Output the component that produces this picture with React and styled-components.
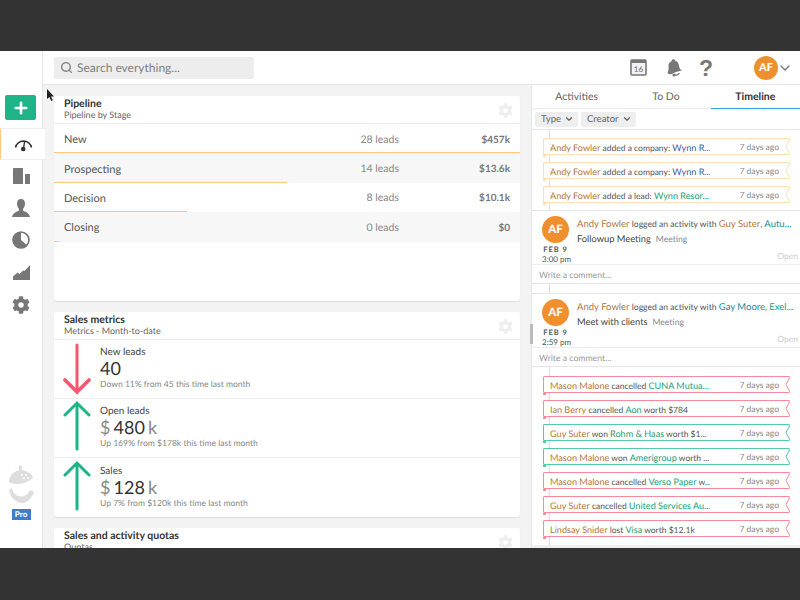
import React from "react"
import styled, { createGlobalStyle } from "styled-components"
import { Search, ChevronDown, Plus } from "lucide-react"
import { FaCog } from "react-icons/fa"

const GlobalStyle = createGlobalStyle`
  html, body { margin: 0; padding: 0; background: #333; }
  * { box-sizing: border-box; }
  body {
    font-family: "Lato", "Open Sans", sans-serif;
    color: #444;
    text-rendering: geometricPrecision;
  }
`

const Page = styled.div`
  width: 800px;
  height: 600px;
  display: flex;
  flex-direction: column;
  overflow: hidden;
`
const Band = styled.div`
  height: ${props => props.$h}px;
  flex: none;
  background: #333;
`
const Screen = styled.div`
  position: relative;
  height: 497px;
  flex: none;
  display: flex;
  background: #fff;
  overflow: hidden;
`

/* left rail */
const Rail = styled.nav`
  width: 43px;
  flex: none;
  display: flex;
  flex-direction: column;
  align-items: center;
  padding-top: 44px;
  border-right: 1px solid #e6e6e6;
  background: #fff;
`
const AddButton = styled.div`
  width: 31px;
  height: 25px;
  margin-left: -1px;
  border-radius: 2px;
  background: #1fb487;
  color: #fff;
  display: flex;
  align-items: center;
  justify-content: center;
`
const RailItem = styled.div`
  position: relative;
  width: ${props => (props.$active ? "45px" : "42px")};
  align-self: flex-start;
  height: ${props => props.$h || 32}px;
  display: flex;
  align-items: center;
  justify-content: center;
  color: ${props => (props.$active ? "#333" : "#777")};
  background: #fff;
  z-index: 1;
  ${props =>
    props.$active &&
    `border-left: 1px solid #fdc77e;
     border-top: 1px solid #eee;
     border-bottom: 1px solid #eee;
     margin-top: 8px;`}
`
const RailSpacer = styled.div`
  flex: 1;
`
const Logo = styled.div`
  display: flex;
  flex-direction: column;
  align-items: center;
  gap: 6px;
  margin-bottom: 28px;
`
const ProBadge = styled.span`
  width: 19px;
  height: 11px;
  background: #3f7cc9;
  color: #fff;
  font-size: 8px;
  font-weight: 900;
  line-height: 11px;
  text-align: center;
`

/* top bar */
const Workspace = styled.div`
  flex: 1;
  min-width: 0;
  display: flex;
  flex-direction: column;
`
const TopBar = styled.header`
  height: 34px;
  flex: none;
  display: flex;
  align-items: center;
  padding: 0 7px 0 11px;
  border-bottom: 1px solid #e6e6e6;
`
const SearchBox = styled.div`
  width: 200px;
  height: 22px;
  display: flex;
  align-items: center;
  gap: 4px;
  padding-left: 6px;
  background: #ededed;
  border-radius: 2px;
  color: #808080;
  font-size: 12px;
`
const TopIcons = styled.div`
  margin-left: auto;
  display: flex;
  align-items: center;
  color: #777;
`
const BellSlot = styled.span`
  margin-left: 20px;
  line-height: 0;
`
const HelpMark = styled.span`
  width: 12px;
  margin-left: 16px;
  font-family: "Liberation Sans", sans-serif;
  font-size: 23px;
  line-height: 24px;
  font-weight: 700;
  text-align: center;
  color: #777;
`
const TopAvatar = styled.div`
  width: 24px;
  height: 24px;
  margin-left: 43px;
  border-radius: 50%;
  background: #f08f2d;
  color: #fff;
  font-size: 11px;
  font-weight: 900;
  display: flex;
  align-items: center;
  justify-content: center;
`
const Caret = styled(ChevronDown)`
  margin-left: -1px;
`
const Below = styled.div`
  flex: 1;
  min-height: 0;
  display: flex;
`

/* dashboard column */
const Dashboard = styled.main`
  width: 488px;
  flex: none;
  padding: 11px 11px 0;
  display: flex;
  flex-direction: column;
  gap: 11px;
  background: #f3f3f3;
  overflow: hidden;
`
const Card = styled.section`
  flex: none;
  height: ${props => props.$h}px;
  background: #fff;
  border-radius: 3px;
  box-shadow: 0 1px 1px #ddd;
  display: flex;
  flex-direction: column;
`
const CardHead = styled.div`
  height: 28px;
  flex: none;
  padding: 2px 7px 0 10px;
  display: flex;
  justify-content: space-between;
  border-bottom: 1px solid #eee;
`
const CardTitle = styled.div`
  font-size: 10.5px;
  line-height: 12px;
  font-weight: 700;
  color: #333;
`
const CardSub = styled.div`
  font-size: 9px;
  line-height: 10px;
  color: #666;
`
const Cog = styled.span`
  color: #eee;
  margin-top: 5px;
  line-height: 0;
`
const StageRow = styled.div`
  position: relative;
  height: 29.4px;
  flex: none;
  display: flex;
  align-items: center;
  padding: 2px 10px 0;
  font-size: 11px;
  color: #555;
  background: ${props => (props.$shade ? "#f7f7f7" : "#fff")};
`
const StageName = styled.span`
  flex: 1;
`
const StageLeads = styled.span`
  width: 60px;
  text-align: right;
  color: #888;
  font-size: 10.5px;
`
const StageValue = styled.span`
  width: 111px;
  text-align: right;
  color: #777;
  font-size: 10px;
  font-weight: 700;
`
const Progress = styled.i`
  position: absolute;
  left: 0;
  bottom: 0;
  height: 1px;
  background: #fdc77e;
`
const MetricRow = styled.div`
  height: 59px;
  flex: none;
  display: flex;
  align-items: center;
  padding-left: 9px;
  border-bottom: ${props => (props.$last ? "none" : "1px solid #eee")};
`
const Arrow = styled.svg`
  width: 28px;
  height: 56px;
  flex: none;
  margin-right: 9px;
`
const MetricBody = styled.div`
  display: flex;
  flex-direction: column;
  padding-bottom: 3px;
`
const MetricLabel = styled.div`
  font-size: 10px;
  line-height: 12px;
  color: #444;
`
const MetricValue = styled.div`
  font-size: 18px;
  line-height: 21px;
  color: #333;
  word-spacing: -1.5px;
`
const Unit = styled.span`
  color: #888;
`
const MetricNote = styled.div`
  font-size: 8.55px;
  line-height: 10px;
  color: #888;
`

/* timeline panel */
const Panel = styled.aside`
  flex: 1;
  min-width: 0;
  position: relative;
  display: flex;
  flex-direction: column;
  border-left: 1px solid #e6e6e6;
  background: #fff;
`
const Grip = styled.i`
  position: absolute;
  left: -2px;
  top: 239px;
  width: 3px;
  height: 20px;
  background: #bbb;
`
const Tabs = styled.div`
  height: 24px;
  flex: none;
  display: flex;
  border-bottom: 1px solid #eee;
`
const Tab = styled.div`
  flex: 1;
  text-align: center;
  font-size: 10.5px;
  line-height: 24px;
  font-weight: ${props => (props.$active ? 700 : 400)};
  color: ${props => (props.$active ? "#333" : "#666")};
  border-bottom: ${props => (props.$active ? "1.5px solid #35a9dd" : "none")};
  height: ${props => (props.$active ? "24px" : "23px")};
`
const Filters = styled.div`
  height: 21px;
  flex: none;
  display: flex;
  align-items: center;
  gap: 3px;
  padding-left: 3px;
  border-bottom: 1px solid #e6e6e6;
`
const Filter = styled.div`
  height: 15px;
  padding: 0 4px 0 6px;
  display: flex;
  align-items: center;
  gap: 3px;
  background: #eee;
  border-radius: 2px;
  font-size: 9.5px;
  color: #666;
`
const Feed = styled.div`
  flex: 1;
  min-height: 0;
  display: flex;
  flex-direction: column;
  padding-top: 8px;
  background: linear-gradient(#ddd, #ddd) 17px 0 / 1px 100% no-repeat;
  border-bottom: 3px solid #eee;
`
const Ribbon = styled.div`
  position: relative;
  flex: none;
  width: 247px;
  height: 17px;
  margin: 0 0 7px 11px;
  padding: 1px 10px 0 6px;
  display: flex;
  justify-content: space-between;
  align-items: center;
  background: #fff;
  border: 1px solid ${props => props.$tone};
  border-left-width: 1.5px;
  border-radius: 1px;
  font-size: 8.5px;
  color: #555;
  white-space: nowrap;
`
const Notch = styled.svg`
  position: absolute;
  right: -1px;
  top: -1px;
  width: 5px;
  height: 17px;
`
const Fold = styled.i`
  position: absolute;
  left: -1.5px;
  bottom: -3px;
  width: 3px;
  height: 2px;
  background: ${props => props.$tone};
`
const RibbonText = styled.span`
  width: 160px;
  overflow: hidden;
`
const Ago = styled.span`
  color: #888;
`
const Person = styled.span`
  color: ${props => props.$c || "#b5763a"};
  font-size: ${props => props.$size || 9.1}px;
`
const ActivityCard = styled.div`
  flex: none;
  margin-bottom: ${props => props.$gap}px;
  background: #fff;
  border-top: 1px solid #e6e6e6;
  border-bottom: 1px solid #e6e6e6;
`
const ActivityMain = styled.div`
  position: relative;
  height: 54px;
  display: flex;
  padding: 5px 0 0 10px;
  border-bottom: 1px solid #eee;
`
const Who = styled.div`
  width: 35px;
  flex: none;
  display: flex;
  flex-direction: column;
  align-items: center;
`
const Avatar = styled.div`
  width: 27px;
  height: 27px;
  border-radius: 50%;
  background: #f08f2d;
  color: #fff;
  font-size: 11.5px;
  font-weight: 900;
  display: flex;
  align-items: center;
  justify-content: center;
  margin-right: 8px;
`
const DateLine = styled.div`
  width: 27px;
  margin: 2px 8px 0 0;
  text-align: center;
  font-size: 7.5px;
  line-height: 10px;
  font-weight: 700;
  letter-spacing: 1px;
  color: #555;
  white-space: nowrap;
`
const TimeLine = styled.div`
  width: 27px;
  margin-right: 8px;
  text-align: center;
  font-size: 8px;
  line-height: 9px;
  color: #555;
  white-space: nowrap;
`
const ActivityText = styled.div`
  padding-top: 1px;
  font-size: 8.6px;
  line-height: 14px;
  color: #555;
  white-space: nowrap;
`
const ActivityTitle = styled.span`
  font-size: 9.3px;
  color: #444;
  margin-right: 5px;
`
const Muted = styled.span`
  color: #888;
`
const OpenTag = styled.span`
  position: absolute;
  right: 2px;
  bottom: 3px;
  font-size: 8.5px;
  color: #ccc;
`
const Comment = styled.div`
  height: 18px;
  padding: 1px 0 0 7px;
  font-size: 8.7px;
  line-height: 18px;
  color: #999;
`
const Pointer = styled.svg`
  position: absolute;
  left: 46px;
  top: 38px;
  width: 9px;
  height: 13px;
  z-index: 3;
`

const Gauge = () => (
  <svg width="19" height="16" viewBox="0 0 19 16" fill="none" stroke="currentColor">
    <path d="M1.5 11.5A8.2 8.2 0 0 1 17.5 11.5" strokeWidth="1.6" />
    <path d="M9.4 13L10.6 5.5" strokeWidth="1.4" />
    <circle cx="9.2" cy="13" r="2.3" fill="currentColor" stroke="none" />
  </svg>
)
const Buildings = () => (
  <svg width="17" height="16" viewBox="0 0 17 16" fill="currentColor">
    <rect x="0" y="0" width="10" height="16" rx="0.5" />
    <rect x="12" y="6" width="5" height="10" rx="0.5" />
  </svg>
)
const PersonIcon = () => (
  <svg width="18" height="18" viewBox="0 0 18 18" fill="currentColor">
    <path d="M9 0C6.4 0 5 2 5 4.6C5 7 6 9 7 10V11.5C5 12.8 1 13.2 0 18H18C17 13.2 13 12.8 11 11.5V10C12 9 13 7 13 4.6C13 2 11.6 0 9 0Z" />
  </svg>
)
const Pie = () => (
  <svg width="18" height="18" viewBox="0 0 18 18">
    <circle cx="9" cy="9" r="8" fill="#777" stroke="#777" strokeWidth="1.6" />
    <path d="M9 2A7 7 0 0 1 14.3 13.6L9 9Z" fill="#fff" />
  </svg>
)
const AreaChart = () => (
  <svg width="17" height="15" viewBox="0 0 17 15" fill="currentColor">
    <path d="M0 15V11.5L4.5 7.5L6.5 9L10 5.5L11.5 6L17 0V15Z" />
  </svg>
)
const Acorn = () => (
  <svg width="26" height="38" viewBox="0 0 26 38">
    <path d="M11 0L14 1L13.5 5C19 5.5 24 9 25 13C18 19 8 21 1 17C1 11 5 6.5 11 5.5Z" fill="#ddd" />
    <circle cx="14" cy="10" r="1" fill="#fff" />
    <circle cx="18" cy="10" r="1" fill="#fff" />
    <circle cx="16" cy="13" r="1" fill="#fff" />
    <circle cx="20" cy="13" r="1" fill="#fff" />
    <path d="M4 23C5 29 10 33 16 31C19 30 21 28 22 25L26 27C24 33 20 37 15 38C8 38 2 32 1 25Z" fill="#ddd" />
  </svg>
)
const CalendarIcon = () => (
  <svg width="17" height="17" viewBox="0 0 17 17">
    <rect x="1" y="1" width="15" height="15" rx="1" fill="#f2f2f2" stroke="#777" strokeWidth="1.6" />
    <rect x="1" y="1" width="15" height="3" fill="#777" />
    <text x="8.5" y="13" fontSize="8" textAnchor="middle" fill="#666" fontFamily="Lato">16</text>
  </svg>
)
const BellIcon = () => (
  <svg width="16" height="18" viewBox="0 0 16 18" fill="#777">
    <path d="M5.5 0.5C7 0 8 0.8 8.2 1.8C10.8 2.6 11.8 4.8 12 7C12.2 9 13.5 10.5 15 11.5C12 12 8 13 4.5 15C2.5 15.5 1 15 0.5 14C1.5 12 1.8 9.5 1.5 7C1.3 4.8 2.5 3 4.6 2.2C4.5 1.5 4.8 0.8 5.5 0.5Z" />
    <path d="M6.5 15.5C8.5 16.5 11 16 12.5 14.2" fill="none" stroke="#777" strokeWidth="1.3" />
    <circle cx="7" cy="16" r="1.6" />
  </svg>
)
const ArrowUp = () => (
  <Arrow viewBox="0 0 28 56" fill="none" stroke="#1fb487" strokeWidth="3" strokeLinecap="round">
    <path d="M14 3V49M2 15L14 3L26 15" />
  </Arrow>
)
const ArrowDown = () => (
  <Arrow viewBox="0 0 28 56" fill="none" stroke="#f7566f" strokeWidth="3" strokeLinecap="round">
    <path d="M14 4V51" />
    <path d="M2 39L14 51L26 39" strokeWidth="3.6" />
  </Arrow>
)

const stages = [
  { name: "New", leads: "28 leads", value: "$457k", pct: 100 },
  { name: "Prospecting", leads: "14 leads", value: "$13.6k", pct: 50, shade: true },
  { name: "Decision", leads: "8 leads", value: "$10.1k", pct: 28.6 },
  { name: "Closing", leads: "0 leads", value: "$0", pct: 1, shade: true },
]

const GREEN = "#1d9e78"
const BLUE = "#3c5aa8"
const TEAL = "#1b8a9c"
const ORANGE_EDGE = "#fde0b8"
const RED_EDGE = "#fb8a9c"
const GREEN_EDGE = "#55c9a8"

const TimelineRibbon = ({ tone, children }) => (
  <Ribbon $tone={tone}>
    <RibbonText>{children}</RibbonText>
    <Ago>7 days ago</Ago>
    <Notch viewBox="0 0 5 17">
      <path d="M5 1L1 8.5L5 16" fill="#fff" stroke={tone} strokeWidth="1" />
    </Notch>
    <Fold $tone={tone} />
  </Ribbon>
)

const Activity = ({ time, title, gap, children }) => (
  <ActivityCard $gap={gap}>
    <ActivityMain>
      <Who>
        <Avatar>AF</Avatar>
        <DateLine>FEB 9</DateLine>
        <TimeLine>{time}</TimeLine>
      </Who>
      <ActivityText>
        <div>{children}</div>
        <div>
          <ActivityTitle>{title}</ActivityTitle>
          <Muted>Meeting</Muted>
        </div>
      </ActivityText>
      <OpenTag>Open</OpenTag>
    </ActivityMain>
    <Comment>Write a comment...</Comment>
  </ActivityCard>
)

export default function App() {
  return (
    <Page>
      <GlobalStyle />
      <Band $h={51} />
      <Screen>
        <Pointer viewBox="0 0 9 13">
          <path d="M1 0V10L3.4 8L5.2 12L6.8 11.2L5 7.5H8Z" fill="#222" />
        </Pointer>
        <Rail>
          <AddButton><Plus size={18} strokeWidth={3.5} /></AddButton>
          <RailItem $active $h={32}><Gauge /></RailItem>
          <RailItem><Buildings /></RailItem>
          <RailItem><PersonIcon /></RailItem>
          <RailItem><Pie /></RailItem>
          <RailItem><AreaChart /></RailItem>
          <RailItem $h={33}><FaCog size={18} /></RailItem>
          <RailSpacer />
          <Logo>
            <Acorn />
            <ProBadge>Pro</ProBadge>
          </Logo>
        </Rail>
        <Workspace>
          <TopBar>
            <SearchBox>
              <Search size={13} strokeWidth={2.5} />
              Search everything...
            </SearchBox>
            <TopIcons>
              <CalendarIcon />
              <BellSlot><BellIcon /></BellSlot>
              <HelpMark>?</HelpMark>
              <TopAvatar>AF</TopAvatar>
              <Caret size={16} strokeWidth={2} />
            </TopIcons>
          </TopBar>
          <Below>
            <Dashboard>
              <Card $h={205}>
                <CardHead>
                  <div>
                    <CardTitle>Pipeline</CardTitle>
                    <CardSub>Pipeline by Stage</CardSub>
                  </div>
                  <Cog><FaCog size={15} /></Cog>
                </CardHead>
                {stages.map(s => (
                  <StageRow key={s.name} $shade={s.shade}>
                    <StageName>{s.name}</StageName>
                    <StageLeads>{s.leads}</StageLeads>
                    <StageValue>{s.value}</StageValue>
                    <Progress style={{ width: `${s.pct}%` }} />
                  </StageRow>
                ))}
              </Card>
              <Card $h={205}>
                <CardHead>
                  <div>
                    <CardTitle>Sales metrics</CardTitle>
                    <CardSub>Metrics - Month-to-date</CardSub>
                  </div>
                  <Cog><FaCog size={15} /></Cog>
                </CardHead>
                <MetricRow>
                  <ArrowDown />
                  <MetricBody>
                    <MetricLabel>New leads</MetricLabel>
                    <MetricValue>40</MetricValue>
                    <MetricNote>Down 11% from 45 this time last month</MetricNote>
                  </MetricBody>
                </MetricRow>
                <MetricRow>
                  <ArrowUp />
                  <MetricBody>
                    <MetricLabel>Open leads</MetricLabel>
                    <MetricValue><Unit>$</Unit> 480 <Unit>k</Unit></MetricValue>
                    <MetricNote>Up 169% from $178k this time last month</MetricNote>
                  </MetricBody>
                </MetricRow>
                <MetricRow $last>
                  <ArrowUp />
                  <MetricBody>
                    <MetricLabel>Sales</MetricLabel>
                    <MetricValue><Unit>$</Unit> 128 <Unit>k</Unit></MetricValue>
                    <MetricNote>Up 7% from $120k this time last month</MetricNote>
                  </MetricBody>
                </MetricRow>
              </Card>
              <Card $h={40}>
                <CardHead>
                  <div>
                    <CardTitle>Sales and activity quotas</CardTitle>
                    <CardSub>Quotas</CardSub>
                  </div>
                  <Cog><FaCog size={15} /></Cog>
                </CardHead>
              </Card>
            </Dashboard>
            <Panel>
              <Grip />
              <Tabs>
                <Tab>Activities</Tab>
                <Tab>To Do</Tab>
                <Tab $active>Timeline</Tab>
              </Tabs>
              <Filters>
                <Filter>Type <ChevronDown size={10} strokeWidth={3} /></Filter>
                <Filter>Creator <ChevronDown size={10} strokeWidth={3} /></Filter>
              </Filters>
              <Feed>
                <TimelineRibbon tone={ORANGE_EDGE}>
                  <Person>Andy Fowler</Person> added a company: <Person $c={BLUE}>Wynn R...</Person>
                </TimelineRibbon>
                <TimelineRibbon tone={ORANGE_EDGE}>
                  <Person>Andy Fowler</Person> added a company: <Person $c={BLUE}>Wynn R...</Person>
                </TimelineRibbon>
                <TimelineRibbon tone={ORANGE_EDGE}>
                  <Person>Andy Fowler</Person> added a lead: <Person $c={GREEN}>Wynn Resor...</Person>
                </TimelineRibbon>
                <Activity time="3:00 pm" title="Followup Meeting" gap={9}>
                  <Person $size={9.5}>Andy Fowler</Person> logged an activity with <Person $size={9.5}>Guy Suter</Person>, <Person $size={9.5} $c={TEAL}>Autu...</Person>
                </Activity>
                <Activity time="2:59 pm" title="Meet with clients" gap={9}>
                  <Person $size={9.5}>Andy Fowler</Person> logged an activity with <Person $size={9.5} $c={TEAL}>Gay Moore</Person>, <Person $size={9.5} $c={GREEN}>Exel...</Person>
                </Activity>
                <TimelineRibbon tone={RED_EDGE}>
                  <Person>Mason Malone</Person> cancelled <Person $c={GREEN}>CUNA Mutua...</Person>
                </TimelineRibbon>
                <TimelineRibbon tone={RED_EDGE}>
                  <Person>Ian Berry</Person> cancelled <Person $c={GREEN}>Aon</Person> worth $784
                </TimelineRibbon>
                <TimelineRibbon tone={GREEN_EDGE}>
                  <Person>Guy Suter</Person> won <Person $c={GREEN}>Rohm &amp; Haas</Person> worth $1...
                </TimelineRibbon>
                <TimelineRibbon tone={GREEN_EDGE}>
                  <Person>Mason Malone</Person> won <Person $c={GREEN}>Amerigroup</Person> worth ...
                </TimelineRibbon>
                <TimelineRibbon tone={RED_EDGE}>
                  <Person>Mason Malone</Person> cancelled <Person $c={GREEN}>Verso Paper</Person> w...
                </TimelineRibbon>
                <TimelineRibbon tone={RED_EDGE}>
                  <Person>Guy Suter</Person> cancelled <Person $c={GREEN}>United Services Au...</Person>
                </TimelineRibbon>
                <TimelineRibbon tone={RED_EDGE}>
                  <Person>Lindsay Snider</Person> lost <Person $c={GREEN}>Visa</Person> worth $12.1k
                </TimelineRibbon>
              </Feed>
            </Panel>
          </Below>
        </Workspace>
      </Screen>
      <Band $h={52} />
    </Page>
  )
}
